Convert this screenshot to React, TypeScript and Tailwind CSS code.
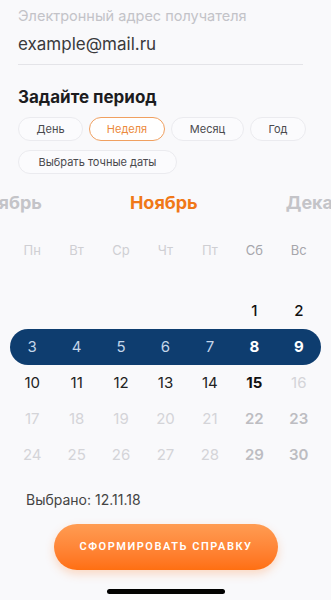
import React from 'react';

const WEEKDAYS = ['Пн', 'Вт', 'Ср', 'Чт', 'Пт', 'Сб', 'Вс'];
const PERIODS = [
  { label: 'День', w: 'w-[65px]' },
  { label: 'Неделя', w: 'w-[76px]', active: true },
  { label: 'Месяц', w: 'w-[73px]' },
  { label: 'Год', w: 'w-[56px]' },
  { label: 'Выбрать точные даты', w: 'w-[159px]' },
];

type Day = { n: number | null; cls: string };

const past = 'text-[#222] font-normal';
const faded = 'text-[#d4d4d8] font-normal';
const fadedWeekend = 'text-[#bdbdc2] font-semibold';

const ROWS: Day[][] = [
  [
    { n: null, cls: '' }, { n: null, cls: '' }, { n: null, cls: '' }, { n: null, cls: '' }, { n: null, cls: '' },
    { n: 1, cls: 'text-[#111] font-medium' }, { n: 2, cls: 'text-[#111] font-medium' },
  ],
  [10, 11, 12, 13, 14].map((n) => ({ n, cls: past })).concat([
    { n: 15, cls: 'text-[#111] font-bold' },
    { n: 16, cls: faded },
  ]),
  [17, 18, 19, 20, 21].map((n) => ({ n, cls: faded })).concat([
    { n: 22, cls: fadedWeekend },
    { n: 23, cls: fadedWeekend },
  ]),
  [24, 25, 26, 27, 28].map((n) => ({ n, cls: faded })).concat([
    { n: 29, cls: fadedWeekend },
    { n: 30, cls: fadedWeekend },
  ]),
];

function DayRow({ days }: { days: Day[] }) {
  return (
    <div className="grid grid-cols-7 h-[36px] items-center text-center text-[15px]">
      {days.map((d, i) => (
        <span key={i} className={d.cls}>{d.n ?? ''}</span>
      ))}
    </div>
  );
}

export default function App() {
  return (
    <div className="w-[331px] h-[600px] overflow-hidden bg-[#f9f9fb]" style={{ fontFamily: 'Inter, "Noto Sans", sans-serif' }}>
      <div className="px-[18px] pt-[8px]">
        <div className="text-[14.5px] leading-[16px] text-[#c3c3c8]">Электронный адрес получателя</div>
        <div className="mr-[10px] border-b border-[#e4e4e8] pb-[8px]">
          <div className="mt-[8px] text-[17px] leading-[24px] text-[#3a3a3c]">example@mail.ru</div>
        </div>
        <h2 className="mt-[21px] text-[17px] leading-[22px] font-bold text-[#1c1c1e]">Задайте период</h2>
        <div className="mt-[9px] flex flex-wrap gap-x-[6px] gap-y-[9px]">
          {PERIODS.map((p) => (
            <button
              key={p.label}
              className={`${p.w} h-[24px] rounded-full text-[11px] flex items-center justify-center ${
                p.active
                  ? 'border border-[#f0a060] text-[#ec8a3c] bg-white'
                  : 'border border-[#ebebef] text-[#4a4a4e] bg-[#fbfbfd]'
              }`}
            >
              {p.label}
            </button>
          ))}
        </div>
      </div>

      {/* Months */}
      <div className="mt-[17px] flex justify-center gap-[88px] overflow-hidden whitespace-nowrap text-[18px] leading-[24px] font-bold">
        <span className="text-[#c4c4c8]">Октябрь</span>
        <span className="text-[#f07818]">Ноябрь</span>
        <span className="text-[#c4c4c8]">Декабрь</span>
      </div>

      {/* Calendar */}
      <div className="px-[10px]">
        <div className="mt-[27px] grid grid-cols-7 text-center text-[13px] leading-[16px]">
          {WEEKDAYS.map((w, i) => (
            <span key={w} className={i >= 5 ? 'text-[#a6a6ab]' : 'text-[#cfcfd3]'}>{w}</span>
          ))}
        </div>
        <div className="mt-[35px]">
          <DayRow days={ROWS[0]} />
          <div className="grid grid-cols-7 h-[36px] items-center text-center text-[15px] rounded-full bg-[#0e3d6f]">
            {[3, 4, 5, 6, 7].map((n) => (
              <span key={n} className="text-[#c4d6ea]">{n}</span>
            ))}
            <span className="text-white font-bold">8</span>
            <span className="text-white font-bold">9</span>
          </div>
          <DayRow days={ROWS[1]} />
          <DayRow days={ROWS[2]} />
          <DayRow days={ROWS[3]} />
        </div>
      </div>

      <div className="mt-[17px] px-[26px] text-[14px] leading-[20px] text-[#444]">Выбрано: 12.11.18</div>

      <button
        className="mt-[14px] ml-[54px] w-[224px] h-[46px] rounded-full bg-gradient-to-b from-[#ff9c52] to-[#ff6f10] text-white text-[11px] font-semibold tracking-[0.14em] shadow-[0_4px_10px_rgba(255,120,30,0.25)]"
        style={{ fontFamily: 'Roboto, sans-serif' }}
      >
        СФОРМИРОВАТЬ СПРАВКУ
      </button>

      <div className="mt-[19px] ml-[107px] w-[118px] h-[5px] rounded-full bg-black" />
    </div>
  );
}
